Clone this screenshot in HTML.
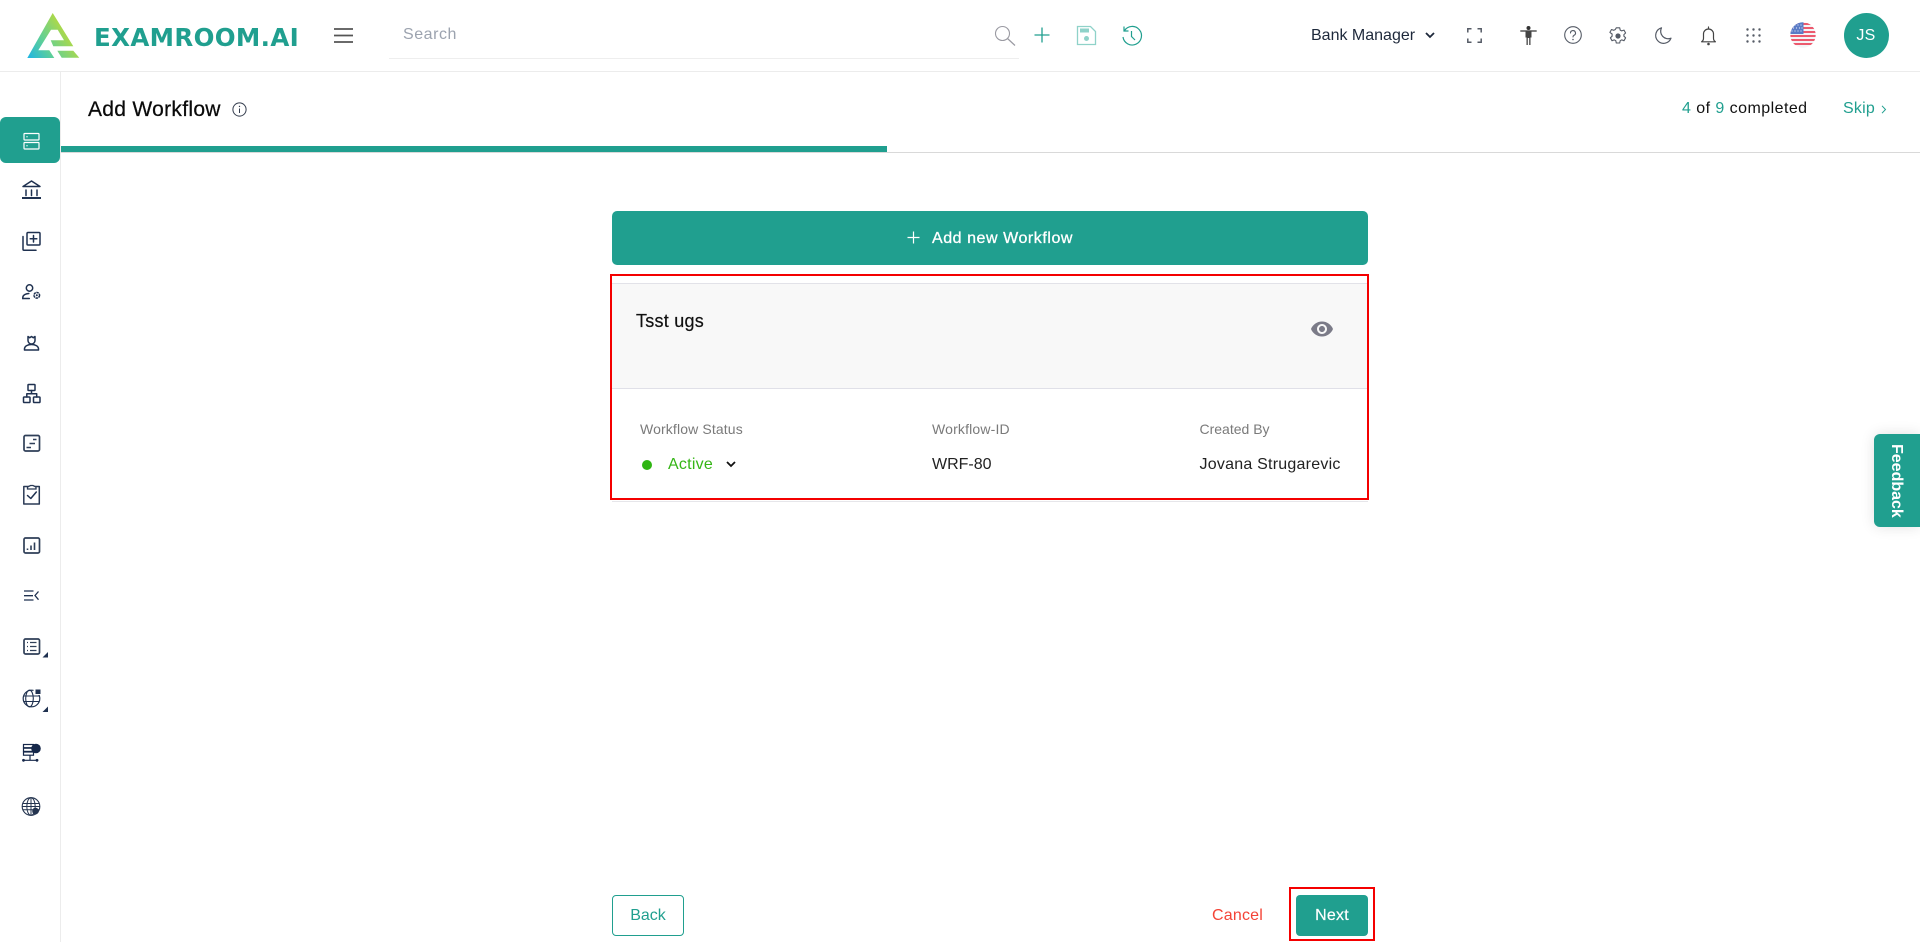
<!DOCTYPE html>
<html lang="en">
<head>
<meta charset="utf-8">
<title>Add Workflow</title>
<style>
html,body{margin:0;padding:0;width:1920px;height:942px;overflow:hidden;background:#fff;font-family:"Liberation Sans",Arial,sans-serif;color:#1a1a1a}
.t{position:absolute;white-space:nowrap;line-height:20px;font-size:16px}
.b{position:absolute;box-sizing:border-box}
svg{position:absolute;overflow:visible}
.n{fill:none;stroke:#1f3150;stroke-width:1.5;stroke-linecap:round;stroke-linejoin:round}
.h{fill:none;stroke:#555b66;stroke-width:1.4;stroke-linecap:round;stroke-linejoin:round}
</style>
</head>
<body>
<!-- structure lines -->
<div class="b" style="left:0;top:71px;width:1920px;height:1px;background:#ececec"></div>
<div class="b" style="left:60px;top:71px;width:1px;height:871px;background:#ececec"></div>
<div class="b" style="left:61px;top:152px;width:1859px;height:1px;background:#d9d9d9"></div>
<div class="b" style="left:61px;top:146px;width:826px;height:6px;background:#209f8f"></div>

<!-- logo -->
<svg style="left:0;top:0" width="90" height="70" viewBox="0 0 90 70">
<defs><linearGradient id="lg" x1="27" y1="58" x2="72" y2="28" gradientUnits="userSpaceOnUse"><stop offset="0" stop-color="#1cb4e6"/><stop offset=".4" stop-color="#5ccf9a"/><stop offset=".7" stop-color="#8fd568"/><stop offset="1" stop-color="#c6dc2e"/></linearGradient></defs>
<path fill="url(#lg)" d="M52.7 13 73.300 46.300H53.300L50.700 40.300H64L57.700 29.700H51L38.300 50.300H49.300L54.300 58H27.300Z"/>
<path fill="url(#lg)" d="M57.300 50.700H73.300L79.300 57.700H61.700Z"/>
</svg>
<div class="t" style="left:94px;top:27px;line-height:21px;font-family:'DejaVu Sans','Liberation Sans',sans-serif;font-size:24.5px;font-weight:bold;color:#209f8f;letter-spacing:.35px">EXAMROOM.AI</div>

<!-- hamburger -->
<svg style="left:334px;top:28px" width="20" height="15"><path d="M0 1h19M0 7.500h19M0 14h19" stroke="#555" stroke-width="1.800" fill="none"/></svg>

<!-- search -->
<div class="t" style="left:403px;top:25px;color:#9ca3af;letter-spacing:.55px">Search</div>
<div class="b" style="left:389px;top:58px;width:630px;height:1px;background:#eeeeee"></div>
<svg style="left:994px;top:25px" width="22" height="22" viewBox="0 0 22 22"><circle cx="8.500" cy="8.500" r="7" fill="none" stroke="#9a9aa2" stroke-width="1.100"/><path d="M13.500 13.500 21 20.500" stroke="#9a9aa2" stroke-width="1.200" fill="none"/></svg>
<svg style="left:1034px;top:27px" width="16" height="16"><path d="M8 .5v15M.5 8h15" stroke="#209f8f" stroke-width="1.300" fill="none"/></svg>
<svg style="left:1076px;top:25px" width="21" height="21" viewBox="0 0 21 21"><path d="M1.500 1.500h13l5 5v13h-18z" fill="none" stroke="#8fd2c9" stroke-width="1.300"/><rect x="4" y="3.500" width="9" height="4" fill="#8fd2c9"/><circle cx="10.500" cy="13.500" r="2.500" fill="#8fd2c9"/></svg>
<svg style="left:1121px;top:25px" width="22" height="22" viewBox="0 0 22 22"><path d="M3.500 5.500A9.300 9.300 0 1 1 2 12" fill="none" stroke="#209f8f" stroke-width="1.200"/><path d="M3 1.500v4.500h4.500" fill="none" stroke="#209f8f" stroke-width="1.200"/><path d="M10.500 6v5.500l3.500 3.500" fill="none" stroke="#209f8f" stroke-width="1.200"/></svg>

<!-- role -->
<div class="t" style="left:1311px;top:26px;color:#1e293b">Bank Manager</div>
<svg style="left:1425px;top:32px" width="10" height="7"><path d="M1 1l4 4 4-4" fill="none" stroke="#1e293b" stroke-width="1.800"/></svg>

<!-- header right icons -->
<svg style="left:1467px;top:28px" width="15" height="15"><path d="M.8 4.500V.8h3.700M10.500.8h3.700v3.700M14.200 10.500v3.700h-3.700M4.500 14.200H.8v-3.700" fill="none" stroke="#555b66" stroke-width="1.500"/></svg>
<svg style="left:1520px;top:26px" width="17" height="20" viewBox="0 0 17 20"><circle cx="8.500" cy="2" r="2" fill="#333"/><path d="M.3 5h16.400" stroke="#333" stroke-width="1.200"/><path d="M5.500 5h6v6.500h-1V19H9.200v-7H7.800v7H6.500v-7.500h-1z" fill="#444"/></svg>
<svg style="left:1564px;top:26px" width="18" height="18" viewBox="0 0 18 18"><circle cx="9" cy="9" r="8.300" class="h" style="stroke-width:1.100"/><path d="M6.500 7a2.500 2.500 0 1 1 3.600 2.300c-.8.400-1.100.9-1.100 1.700" class="h" style="stroke-width:1.100"/><circle cx="9" cy="13.500" r=".8" fill="#555b66"/></svg>
<svg style="left:1609px;top:27px" width="18" height="18" viewBox="0 0 18 18"><path d="M7.300 1h3.400l.5 2.300 1.500.8 2.300-.8 1.600 2.900-1.700 1.600v1.600l1.700 1.600-1.600 2.900-2.300-.8-1.500.8-.5 2.300H7.300l-.5-2.300-1.500-.8-2.300.8-1.600-2.900 1.700-1.600V7.200L.9 5.600 2.500 2.700l2.300.8 1.500-.8z" transform="translate(0,-.200)" class="h" style="stroke-width:1.100"/><circle cx="9" cy="9" r="2.600" fill="#555b66"/></svg>
<svg style="left:1655px;top:27px" width="17" height="17" viewBox="0 0 17 17"><path d="M6.500 .8A7.900 7.900 0 1 0 16 11.200 7.500 7.500 0 0 1 6.500 .8z" class="h" style="stroke-width:1.200"/></svg>
<svg style="left:1701px;top:26px" width="15" height="20" viewBox="0 0 15 20"><path d="M.6 15.800c1.300-.8 1.900-1.700 1.900-3.500V8a5 5 0 0 1 10 0v4.300c0 1.800.6 2.700 1.900 3.500z" class="h" style="stroke:#444;stroke-width:1.200"/><path d="M7.500 1v2" class="h" style="stroke:#444;stroke-width:1.200"/><circle cx="7.500" cy="18" r="1.300" fill="#444"/></svg>
<svg style="left:1746px;top:28px" width="15" height="15"><g fill="#555b66"><circle cx="1.500" cy="1.500" r="1.200"/><circle cx="7.500" cy="1.500" r="1.200"/><circle cx="13.500" cy="1.500" r="1.200"/><circle cx="1.500" cy="7.500" r="1.200"/><circle cx="7.500" cy="7.500" r="1.200"/><circle cx="13.500" cy="7.500" r="1.200"/><circle cx="1.500" cy="13.500" r="1.200"/><circle cx="7.500" cy="13.500" r="1.200"/><circle cx="13.500" cy="13.500" r="1.200"/></g></svg>
<svg style="left:1790px;top:22px" width="26" height="26" viewBox="0 0 26 26"><defs><clipPath id="fc"><circle cx="13" cy="13" r="12.700"/></clipPath></defs><g clip-path="url(#fc)"><rect width="26" height="26" fill="#f4f4f6"/><path d="M0 2h26M0 6h26M0 10h26M0 14h26M0 18h26M0 22h26" stroke="#ec5a6e" stroke-width="2"/><rect width="13.500" height="12" fill="#5a7bc6"/><g fill="#dfe7f6"><circle cx="5" cy="3" r=".6"/><circle cx="8" cy="3" r=".6"/><circle cx="11" cy="3" r=".6"/><circle cx="3.500" cy="6" r=".6"/><circle cx="6.500" cy="6" r=".6"/><circle cx="9.500" cy="6" r=".6"/><circle cx="12" cy="6" r=".6"/><circle cx="2" cy="9" r=".6"/><circle cx="5" cy="9" r=".6"/><circle cx="8" cy="9" r=".6"/><circle cx="11" cy="9" r=".6"/></g></g></svg>
<div class="b" style="left:1843.500px;top:12.500px;width:45px;height:45px;border-radius:50%;background:#209f8f;color:#fff;text-align:center;line-height:45px;font-size:16px;letter-spacing:.3px">JS</div>

<!-- page title bar -->
<div class="t" style="left:88px;top:100px;font-size:21px;color:#0a0a0a;letter-spacing:.3px;-webkit-text-stroke:.25px #0a0a0a">Add Workflow</div>
<svg style="left:232px;top:102px" width="15" height="15" viewBox="0 0 15 15"><circle cx="7.500" cy="7.500" r="6.600" fill="none" stroke="#333c4d" stroke-width="1"/><path d="M7.500 6.500v4.500" stroke="#333c4d" stroke-width="1"/><circle cx="7.500" cy="4.400" r=".7" fill="#333c4d"/></svg>
<div class="t" style="left:1682px;top:99px;color:#111;letter-spacing:.45px"><span style="color:#209f8f">4</span> of <span style="color:#209f8f">9</span> completed</div>
<div class="t" style="left:1843px;top:99px;color:#209f8f;letter-spacing:.2px">Skip</div>
<svg style="left:1881px;top:105px" width="6" height="9"><path d="M1 .8l3.500 3.700L1 8.200" fill="none" stroke="#209f8f" stroke-width="1"/></svg>

<!-- sidebar -->
<div class="b" style="left:0;top:117px;width:60px;height:46px;background:#209f8f;border-radius:6px"></div>
<svg style="left:0;top:0" width="60" height="840" viewBox="0 0 60 840">
<!-- server -->
<g fill="none" stroke="#fff" stroke-width="1.200"><rect x="24" y="133.500" width="15" height="6.500" rx=".6"/><rect x="24" y="142.500" width="15" height="6.500" rx=".6"/></g><circle cx="27" cy="136.800" r=".7" fill="#fff"/><circle cx="27" cy="145.800" r=".7" fill="#fff"/>
<!-- bank -->
<path class="n" d="M23 186.500 31.500 181l8.500 5.500z"/><path class="n" d="M26 190v5.500M31.500 190v5.500M37 190v5.500"/><path d="M22 198h19" stroke="#1f3150" stroke-width="2"/>
<!-- add -->
<rect class="n" x="27" y="232.500" width="13" height="12.500" rx="1"/><path class="n" d="M23 236.500v12.700a1 1 0 0 0 1 1h12"/><path class="n" d="M33.500 235.500v6.500M30.200 238.700h6.600"/>
<!-- user gear -->
<circle class="n" cx="29.500" cy="288" r="3.200"/><path class="n" d="M22.800 298.500v-1c0-2.500 3-3.800 6-4"/><path class="n" d="M22.800 298.500h6.500"/><circle cx="36.800" cy="295.300" r="2.800" fill="none" stroke="#1f3150" stroke-width="1.500" stroke-dasharray="2.500 .6"/><circle cx="36.800" cy="295.300" r="1" fill="#1f3150"/>
<!-- user -->
<path class="n" d="M28 336.500v4a3.500 3.500 0 0 0 7 0v-4l-1.700 1.200-1.800-1.200-1.800 1.200z"/><path class="n" d="M24.500 350v-1c0-3 3.500-4.500 7-4.500s7 1.500 7 4.500v1z"/>
<!-- org -->
<rect class="n" x="28" y="384.500" width="7" height="6" rx=".6"/><rect class="n" x="23.500" y="397" width="6.500" height="5.500" rx=".8"/><rect class="n" x="33.500" y="397" width="6.500" height="5.500" rx=".8"/><path class="n" d="M31.500 390.500v3.200M26.800 397v-3.300h9.900v3.300"/>
<!-- chart list -->
<rect x="24" y="435.500" width="15.500" height="15.500" rx="1.500" fill="none" stroke="#2f3f58" stroke-width="1.700"/><path d="M33 439.500h3.500M29.500 443.500h5.500M26.500 447.500h4.500" stroke="#2f3f58" stroke-width="1.500" fill="none"/>
<!-- clipboard -->
<rect class="n" x="23.800" y="486.500" width="15.500" height="17.500" style="stroke:#2a3a55"/><path d="M27.500 489v-2l3-1.500h2.500l3 1.500v2z" fill="#fff" stroke="#2a3a55" stroke-width="1.300"/><path class="n" d="M27.500 495.500l3.300 3 5.500-6.500"/>
<!-- bars -->
<rect x="24" y="538" width="15.500" height="15" rx="1.500" fill="none" stroke="#2f3f58" stroke-width="1.700"/><path d="M27.500 548.500v1.500M31 545.500v4.500M34.500 542.500v7.500" stroke="#2f3f58" stroke-width="1.600" fill="none"/>
<!-- collapse -->
<path d="M24 591h9.500M24 595.700h9M24 600h9.500" stroke="#1f3150" stroke-width="1.300" fill="none"/><path d="M38.500 591.500l-3.500 4 3.500 4.200" fill="none" stroke="#1f3150" stroke-width="1.300"/>
<!-- list -->
<rect x="24" y="639" width="15.500" height="15" rx="1.500" fill="none" stroke="#2f3f58" stroke-width="1.700"/><path d="M27 642.500h1M27 646.500h1M27 650.500h1M30 642.500h6.500M30 646.500h6.500M30 650.500h6.500" stroke="#2f3f58" stroke-width="1.300" fill="none"/>
<path d="M48 652v5.500h-5.500z" fill="#1f3150"/>
<!-- globe -->
<circle cx="31.500" cy="698.500" r="8.300" fill="none" stroke="#1f3150" stroke-width="1.200"/><ellipse cx="29.500" cy="698.500" rx="3.800" ry="8.300" fill="none" stroke="#1f3150" stroke-width="1.100"/><path d="M23.500 696h16M24 701.500h15" stroke="#1f3150" stroke-width="1.100"/><rect x="33.500" y="688.500" width="7" height="6.500" fill="#fff"/><rect x="35.500" y="689.500" width="5" height="4.500" fill="#1f3150"/>
<path d="M48 706.500v5.500h-5.500z" fill="#1f3150"/>
<!-- db -->
<rect x="23.500" y="744.500" width="10" height="3.200" fill="none" stroke="#16284a" stroke-width="1.200"/><rect x="23.500" y="748.200" width="10" height="3.200" fill="none" stroke="#16284a" stroke-width="1.200"/><rect x="23.500" y="752" width="10" height="3.200" fill="none" stroke="#16284a" stroke-width="1.200"/><circle cx="36" cy="748.500" r="4.800" fill="#16284a"/><path d="M30 755.500v4.500M23 760.300h14" stroke="#16284a" stroke-width="1.200"/><circle cx="23.500" cy="760.300" r="1.400" fill="#16284a"/><circle cx="37" cy="760.300" r="1.400" fill="#16284a"/>
<!-- globe gear -->
<circle cx="31" cy="806.500" r="8.800" fill="none" stroke="#24344f" stroke-width="1.100"/><ellipse cx="31" cy="806.500" rx="4.200" ry="8.800" fill="none" stroke="#24344f" stroke-width="1"/><path d="M22.500 803.500h17M22.500 806.500h17M23 809.800h16M31 797.800v17.500" stroke="#24344f" stroke-width="1"/><circle cx="35.500" cy="811" r="3.300" fill="#24344f"/>
</svg>

<!-- add new workflow -->
<div class="b" style="left:612px;top:211px;width:756px;height:54px;background:#209f8f;border-radius:5px"></div>
<svg style="left:907px;top:231px" width="13" height="13"><path d="M6.500.5v12M.5 6.500h12" stroke="#fff" stroke-width="1.200" fill="none"/></svg>
<div class="t" style="left:932px;top:229px;color:#fff;letter-spacing:.55px;-webkit-text-stroke:.3px #fff">Add new Workflow</div>

<!-- card -->
<div class="b" style="left:612px;top:501px;width:756px;height:1px;background:#e6e6ea"></div>
<div class="b" style="left:612px;top:283px;width:756px;height:106px;background:#f8f8f8;border-top:1px solid #e2e2e8;border-bottom:1px solid #e0e0e8"></div>
<div class="b" style="left:610px;top:274px;width:759px;height:226px;border:2px solid #f40000"></div>
<div class="t" style="left:636px;top:311px;font-size:18px;color:#111;letter-spacing:.25px;-webkit-text-stroke:.2px #111">Tsst ugs</div>
<svg style="left:1310px;top:317px" width="24" height="24" viewBox="0 0 24 24"><path fill="#7b7b88" d="M12 4.500C7 4.500 2.730 7.610 1 12c1.730 4.390 6 7.500 11 7.500s9.270-3.110 11-7.500c-1.730-4.390-6-7.500-11-7.500zM12 17c-2.760 0-5-2.240-5-5s2.240-5 5-5 5 2.240 5 5-2.240 5-5 5zm0-8c-1.660 0-3 1.340-3 3s1.340 3 3 3 3-1.340 3-3-1.340-3-3-3z"/></svg>
<div class="t" style="left:640px;top:419px;font-size:14px;color:#7a7a7a;letter-spacing:.13px">Workflow Status</div>
<div class="t" style="left:932px;top:419px;font-size:14px;color:#7a7a7a;letter-spacing:.17px">Workflow-ID</div>
<div class="t" style="left:1199.500px;top:419px;font-size:14px;color:#7a7a7a">Created By</div>
<div class="b" style="left:642px;top:460px;width:10px;height:10px;border-radius:50%;background:#2fb512"></div>
<div class="t" style="left:668px;top:455px;color:#35b516;letter-spacing:.25px">Active</div>
<svg style="left:726px;top:461px" width="10" height="7"><path d="M1 1l4 4 4-4" fill="none" stroke="#111" stroke-width="1.800"/></svg>
<div class="t" style="left:932px;top:455px;color:#222">WRF-80</div>
<div class="t" style="left:1199.500px;top:455px;color:#222;letter-spacing:.23px">Jovana Strugarevic</div>

<!-- footer -->
<div class="b" style="left:612px;top:895px;width:72px;height:41px;border:1px solid #209f8f;border-radius:4px;color:#209f8f;text-align:center;line-height:39px;font-size:16px">Back</div>
<div class="t" style="left:1212px;top:906px;color:#f44336;letter-spacing:.2px">Cancel</div>
<div class="b" style="left:1296px;top:895px;width:72px;height:41px;background:#209f8f;border-radius:4px;color:#fff;text-align:center;line-height:41px;font-size:16px;letter-spacing:.2px;-webkit-text-stroke:.2px #fff">Next</div>
<div class="b" style="left:1289px;top:887px;width:86px;height:54px;border:2px solid #f40000"></div>

<!-- feedback -->
<div class="b" style="left:1874px;top:434px;width:46px;height:93px;background:#209f8f;border-radius:6px 0 0 6px;box-shadow:0 0 14px rgba(0,0,0,.12)"></div>
<div class="b" style="left:1873px;top:434px;width:46px;height:93px;color:#fff;font-weight:bold;font-size:16px;writing-mode:vertical-rl;text-align:center;line-height:46px">Feedback</div>
</body>
</html>
